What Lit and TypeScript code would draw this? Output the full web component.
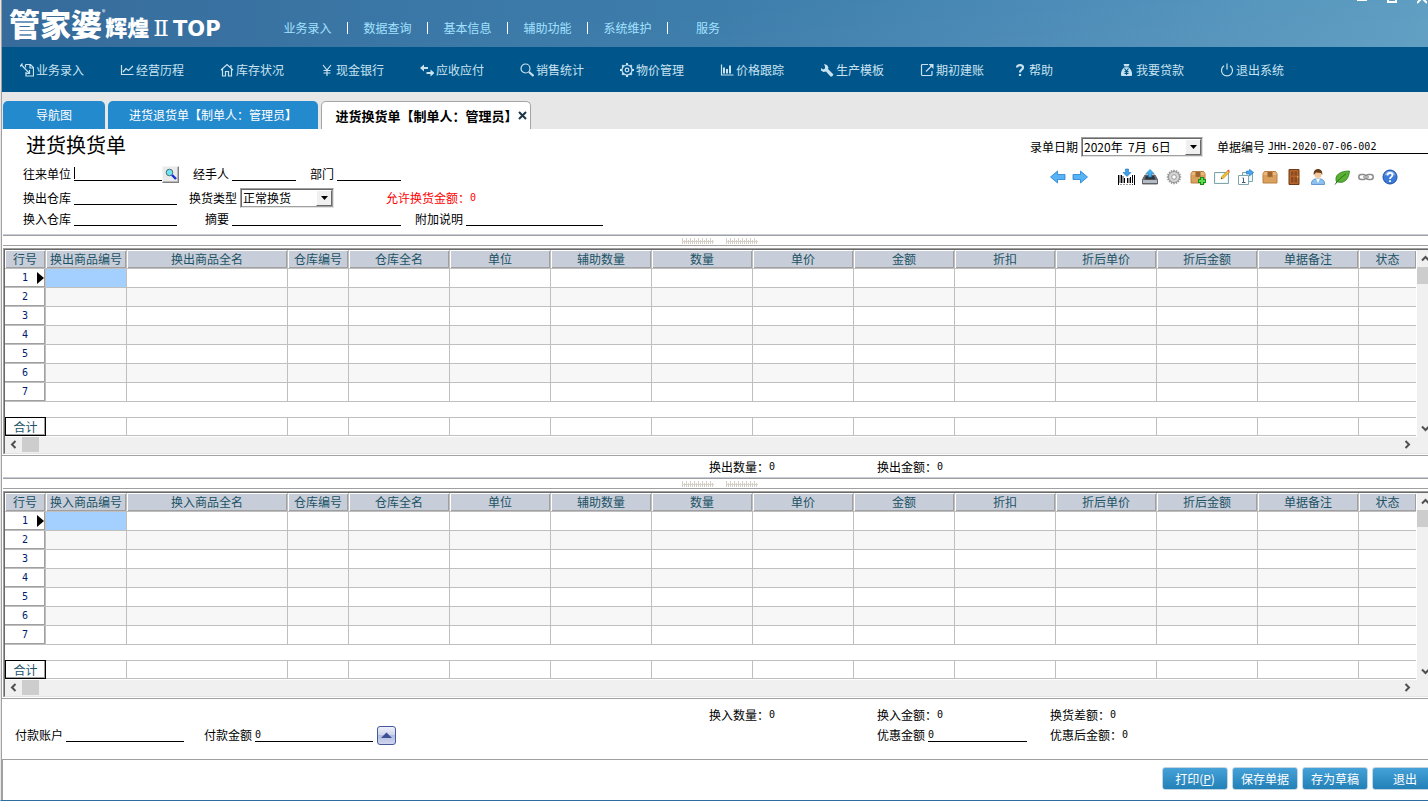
import { LitElement, html, svg, css, nothing } from "lit";
import { customElement, property } from "lit/decorators.js";
import { classMap } from "lit/directives/class-map.js";

const NAV_ICONS: Record<string, unknown> = {
  entry: svg`<path d="M5.500 1.500h5l3 3v8.500h-7.500v-4M10 1.500v3.500h3.500M1 1.500l8.500 9M0 3.500l2.500-3M9.500 7v3.500H6.500M5.500 1.500v3" />`,
  chart: svg`<path d="M1.500 2v9.500h12M3 9l3-3.500 2.500 2L13 3" />`,
  house: svg`<path d="M1 7l6-5.500L13 7M2.500 6v7h3V8.500h3V13h3V6M11 2v2.500" />`,
  yen: svg`<path d="M3 2l4 5 4-5M7 7v6M3.500 7.500h7M3.500 10h7" />`,
  swap: svg`<path d="M3 5h5M6.500 10h5" stroke-width="2" /><path class="fill" d="M0 5l4-3.500v7zM14.500 10l-4-3.500v7z" />`,
  search: svg`<circle cx="5.500" cy="5.500" r="4.500" /><path d="M9 9l4.500 4" stroke-width="2.200" />`,
  gear: svg`<circle cx="7" cy="7" r="5" /><circle cx="7" cy="7" r="1.800" /><path stroke-width="2" d="M7 0v2M7 12v2M0 7h2M12 7h2M2.200 2.200l1.300 1.300M10.500 10.500l1.300 1.300M2.200 11.800l1.300-1.300M10.500 3.500l1.300-1.300" />`,
  bars: svg`<path d="M1.500 1.500v10.500h12" /><path stroke-width="2" d="M4 4.500v6M7 6v4.500M10 2.500v8" />`,
  wrench: svg`<path class="fill" d="M4 1l3 1 1.500 2.500-.5 1.500 5.500 5.500-1.500 2h-1.500L6 8.500 3.500 9 1 7.500V5l2 1.500L5 5.500V3.500z" />`,
  open: svg`<path d="M8 1.500H2.500a1 1 0 0 0-1 1v9a1 1 0 0 0 1 1h8.500a1 1 0 0 0 1-1V8M6 8.500L11.500 3" /><path class="fill" d="M8.500 1h5v5z" />`,
  help: svg`<path stroke-width="2.200" d="M4 4.500c0-3.300 6-3.300 6 0C10 7 7 6.500 7 9.500M7 11v2" />`,
  bag: svg`<path class="fill" d="M3.500 1h6l-1 2.500h-4zM4.500 4.300h4C11 6 12.500 9 12 12.500c0 .3-.4.500-1 .5H2c-.6 0-1-.2-1-.5C.5 9 2 6 4.500 4.300z" /><path class="dark" d="M4.500 5.500l2 2.500 2-2.500M6.500 8v4M4.500 8.500h4M4.500 10.300h4" />`,
  power: svg`<path d="M4 2.800a5.500 5.500 0 1 0 6 0M7 0.500v6" />`,
};

const NAV: [string, string][] = [
  ["entry", "业务录入"], ["chart", "经营历程"], ["house", "库存状况"], ["yen", "现金银行"],
  ["swap", "应收应付"], ["search", "销售统计"], ["gear", "物价管理"], ["bars", "价格跟踪"],
  ["wrench", "生产模板"], ["open", "期初建账"], ["help", "帮助"], ["bag", "我要贷款"], ["power", "退出系统"],
];

const box = svg`<path fill="#d9a15c" stroke="#b98045" d="M1 4.500L2.500 2.500h11L15 4.500v9.500H1z" /><path fill="#e9b97c" d="M1.500 4.700L2.800 3h10.400l1.300 1.700v1.300h-13z" /><path fill="#9b6431" d="M5.500 3h5v5.500l-1.200-1-1.300 1-1.300-1-1.200 1z" />`;

const TOOL_ICONS: [string, unknown][] = [
  ["条码录入", svg`<path stroke="#000" d="M.5 6v10M3.500 6v8M6.500 9v5M9.500 9v5M12.500 8v6M14.500 6v8M16.500 6v10" /><path stroke="#000" stroke-width=".8" d="M2 6v8M5 7v7M11 9v5M2.500 15.500h1M5.500 15.500h1M8.500 15.500h1M11.500 15.500h1M14 15.500h1" /><path fill="#3fa0ea" stroke="#1c6fc0" stroke-width=".6" d="M7.500 0h3v3.500H13L9 7.500 5 3.500h2.500z" />`],
  ["导出", svg`<path fill="#6b7078" stroke="#4a4e55" stroke-width=".8" d="M3 6h10l2.500 4.500V15H.5v-4.500z" /><path fill="#b5bac2" d="M1 11h14v3H1z" /><path fill="#31353b" d="M4 7h8l1.500 3.500h-11z" /><path fill="#3fb0f0" stroke="#1b79be" stroke-width=".6" d="M6.500 8V4.500H4L8 .5l4 4H9.500V8z" />`],
  ["设置", svg`<circle cx="8" cy="8" r="5.500" fill="#d5d5d5" stroke="#979797" /><path stroke="#979797" stroke-width="1.600" d="M8 .8v2M8 13.200v2M.8 8h2M13.200 8h2M3 3l1.300 1.300M11.700 11.700L13 13M3 13l1.300-1.300M11.700 4.300L13 3M5.200 1.400l.7 1.700M10.800 1.400l-.7 1.700M5.200 14.600l.7-1.700M10.800 14.600l-.7-1.700M1.400 5.200l1.700.7M1.400 10.800l1.700-.7M14.600 5.200l-1.700.7M14.600 10.800l-1.700-.7" /><circle cx="8" cy="8" r="2.300" fill="#fff" stroke="#999" />`],
  ["新增商品", svg`${box}<path stroke="#1a8a1a" stroke-width="4" d="M12 8v8M8 12h8" /><path stroke="#5edb4a" stroke-width="2" d="M12 9v6M9 12h6" />`],
  ["编辑", svg`<path fill="#eef7f7" stroke="#7fa5ad" d="M.5 3.500h14v11H.5z" /><path fill="#fff" d="M2 5h11v8H2z" /><path fill="#f5c431" stroke="#a77912" stroke-width=".6" d="M7 10l.8-2.500 6-6 1.700 1.500-6 6.200z" /><path fill="#e0604f" d="M13.200 1.500l1-1L16 2l-1 1z" /><path fill="#333" d="M7 10l.4-1.200.8.700z" />`],
  ["转换", svg`<path fill="#eef7f7" stroke="#7fa5ad" d="M4.500 3.500h10v9h-10z" /><path fill="#fff" stroke="#7fa5ad" d="M.5 6.500h10v9H.5z" /><path stroke="#3f5f7a" d="M4.500 9h1v4.500M4 13.500h3.500" /><path fill="#4aa6ef" stroke="#1d75c4" stroke-width=".6" d="M8.500 2h3V.3L15.700 3.500 11.500 7V5h-3z" />`],
  ["商品", box],
  ["退出单据", svg`<path fill="#b3652d" stroke="#6f3a15" d="M3 .5h10v15H3z" /><path fill="#8d4a1d" d="M5 2.500h2.500v4H5zM8.500 2.500H11v4H8.500zM5 8h2.500v5.500H5zM8.500 8H11v5.500H8.500z" /><circle cx="11.700" cy="8" r=".8" fill="#f2c458" />`],
  ["职员", svg`<path fill="#8dc0ef" stroke="#4c86c2" stroke-width=".8" d="M1.500 15.500C1 11 4 10 8 9.500c4 .5 7 1.500 6.500 6z" /><path fill="#fff" d="M6 9.500h4L8 14z" /><circle cx="8" cy="5.500" r="3.500" fill="#f2c79c" /><path fill="#6a3e1d" d="M3.800 6C3 1.500 6 0 8 0s5 1.500 4.200 6L11 4 6 3.500z" />`],
  ["叶子", svg`<path fill="#58b035" stroke="#2f7d1b" stroke-width=".8" d="M2.500 13C0 6 6 2 15.500 2 15 9 11 15 4 13z" /><path stroke="#2b701a" d="M1 15.500C4 11 8 7.500 12 5" />`],
  ["关联", svg`<rect x=".8" y="5.500" width="7" height="5" rx="2.500" stroke="#8b8b8b" stroke-width="1.500" /><rect x="8.200" y="5.500" width="7" height="5" rx="2.500" stroke="#8b8b8b" stroke-width="1.500" /><path stroke="#b5b5b5" stroke-width="2" d="M5 8h6" />`],
  ["帮助", svg`<circle cx="8" cy="8" r="7" fill="#3b7bd9" stroke="#1e4fa5" /><path fill="#7dabe9" d="M2.500 6.500a5.600 5.600 0 0 1 11 0c-3-1.500-8-1.500-11 0z" /><path stroke="#fff" stroke-width="1.800" d="M5.500 6.500C5.500 3 10.500 3 10.500 6 10.500 8 8 7.800 8 10M8 11.300v1.700" />`],
];

const leftArrow = svg`<path fill="#57b3f5" stroke="#2580d0" stroke-width=".8" d="M.5 8l7-6v3.500h7.500v5H7.500V14z" />`;
const rightArrow = svg`<path fill="#57b3f5" stroke="#2580d0" stroke-width=".8" d="M15.500 8l-7-6v3.500H1v5h7.500V14z" />`;

const chevron = (d: string) => html`<svg class="chev" viewBox="0 0 9 9" width="9" height="9" aria-hidden="true"><path d=${d} /></svg>`;

const shared = css`
  * { box-sizing: border-box; }
  button { font: inherit; color: inherit; border: 0; padding: 0; margin: 0; background: none; cursor: default; }
  svg { display: block; flex: none; fill: none; }
`;

@customElement("goods-grid")
export class GoodsGrid extends LitElement {
  @property() kind = "换出";

  static styles = [shared, css`
    :host { display: block; margin: 2px 0 1px 1px; border-top: 1px solid #a0a0a0; border-left: 1px solid #a0a0a0; }
    .frame {
      display: grid; grid-template-columns: minmax(0, 1fr) 12px;
      border-top: 1px solid #696969; border-left: 1px solid #696969; border-bottom: 1px solid #e3e3e3;
    }
    table { width: 100%; table-layout: fixed; border-collapse: separate; border-spacing: 0; margin-bottom: 1px; }
    .w-no { width: 41px; } .w-code { width: 81px; } .w-name { width: 161px; } .w-short { width: 61px; } .w-std { width: 101px; }
    th, td { height: 19px; padding: 0; font-weight: 400; line-height: 16px; text-align: center; white-space: nowrap; overflow: hidden; border-right: 1px solid #bfbfbf; border-bottom: 1px solid #bfbfbf; }
    td:last-child, thead th:last-child { border-right: 0; }
    thead th { background: #c8ced9; color: #1b5266; box-shadow: inset 1px 1px #fff, inset -1px -1px #a0a0a0; }
    tbody th { position: relative; color: #001a70; font-size: 10px; font-family: "DejaVu Sans Mono", monospace; background: #fff; box-shadow: inset -1px -1px #a0a0a0; }
    tbody tr:nth-child(even) td { background: #f7f7f7; }
    tbody .current { background: #a3d0ff; }
    tbody tr.blank:last-child td { height: 15px; border-right: 0; border-bottom: 0; background: #fff; }
    tfoot td { border-top: 1px solid #bfbfbf; }
    tfoot th { border: 1px solid #000; color: #1b5266; box-shadow: inset -1px -1px #a0a0a0; }
    .pointer { position: absolute; right: 1px; top: 3px; }
    .vbar { display: flex; flex-direction: column; background: #f0f0f0; border-left: 1px solid #fff; overflow: hidden; }
    .hbar { display: flex; height: 16px; background: #f0f0f0; }
    .corner { background: #f0f0f0; }
    .arrow { width: 17px; height: 17px; display: grid; place-items: center; flex: none; }
    .hbar .arrow { height: 15px; }
    .thumb { width: 17px; height: 17px; background: #cdcdcd; }
    .hbar .thumb { height: 15px; }
    .hbar .arrow:last-child { margin-left: auto; }
    .vbar .arrow:last-child { margin-top: auto; }
    .chev { stroke: #505050; stroke-width: 2; }
  `];

  render() {
    const heads = ["行号", `${this.kind}商品编号`, `${this.kind}商品全名`, "仓库编号", "仓库全名", "单位", "辅助数量", "数量", "单价", "金额", "折扣", "折后单价", "折后金额", "单据备注", "状态"];
    const cells = heads.slice(1);
    return html`
      <div class="frame">
        <table>
          <colgroup>
            <col class="w-no" /><col class="w-code" /><col class="w-name" /><col class="w-short" />
            ${heads.slice(4, 14).map(() => html`<col class="w-std" />`)}<col />
          </colgroup>
          <thead><tr>${heads.map((h) => html`<th scope="col">${h}</th>`)}</tr></thead>
          <tbody>
            ${[1, 2, 3, 4, 5, 6, 7].map((n) => html`<tr>
              <th scope="row">${n}${n === 1 ? html`<svg class="pointer" width="7" height="12" viewBox="0 0 7 12"><path fill="#000" d="M0 0l7 6-7 6z" /></svg>` : nothing}</th>
              ${cells.map((_, i) => html`<td class=${classMap({ current: n === 1 && i === 0 })}></td>`)}
            </tr>`)}
            <tr class="blank"><td colspan="15"></td></tr>
          </tbody>
          <tfoot><tr><th scope="row">合计</th>${cells.map(() => html`<td></td>`)}</tr></tfoot>
        </table>
        <div class="vbar">
          <button class="arrow" aria-label="向上">${chevron("M1 6.500L4.500 3 8 6.500")}</button>
          <div class="thumb"></div>
          <button class="arrow" aria-label="向下">${chevron("M1 2.500L4.500 6 8 2.500")}</button>
        </div>
        <div class="hbar">
          <button class="arrow" aria-label="向左">${chevron("M6.500 1L3 4.500 6.500 8")}</button>
          <div class="thumb"></div>
          <button class="arrow" aria-label="向右">${chevron("M2.500 1L6 4.500 2.500 8")}</button>
        </div>
        <div class="corner"></div>
      </div>`;
  }
}

@customElement("app-root")
export class AppRoot extends LitElement {
  static styles = [shared, css`
    :host {
      display: flex; flex-direction: column; min-height: 100vh; box-sizing: border-box; overflow: hidden;
      font: 12px/16px "Noto Sans CJK SC", "Liberation Sans", sans-serif; color: #000; background: #fff;
      border-left: 1px solid #e8e8e8; border-bottom: 1px solid #2c6f9f;
    }
    .window { flex: 1; display: flex; flex-direction: column; border-left: 1px solid #a0a0a0; }

    .banner { display: flex; height: 47px; color: #fff; background: linear-gradient(175deg, #ffffff00 40%, #ffffff0a), linear-gradient(90deg, #366b9b, #3b78a7 30%, #3d7dab 50%, #4a8ab6 72%, #5c9cc1); }
    .logo { display: flex; align-items: baseline; width: 266px; padding-left: 7px; white-space: nowrap; line-height: 46px; font-weight: 900; }
    .logo-main { font-size: 31px; }
    .reg { font-size: 7px; font-weight: 400; align-self: flex-start; line-height: 24px; }
    .logo-sub { font-size: 22px; }
    .logo-num { font: 400 23px/46px "DejaVu Serif", serif; margin-left: 4px; }
    .logo-top { font: 700 21px/46px "DejaVu Sans", sans-serif; margin-left: 4px; }
    .menu { display: flex; align-items: center; padding-top: 8px; }
    .menu a { width: 80px; text-align: center; color: #a3e2ff; text-decoration: none; line-height: 12px; border-right: 1px solid #fff; }
    .menu a:last-child { border-right: 0; }
    .win-buttons { display: flex; gap: 20px; margin: -7px 1px 0 auto; height: 12px; }
    .win-buttons svg { stroke: #fff; stroke-width: 2; }

    .nav { display: flex; height: 45px; background: #00568b; }
    .nav a { flex: none; width: 100px; display: flex; align-items: center; justify-content: center; gap: 2px; color: #c9e2f0; text-decoration: none; }
    .nav .short { padding-right: 38px; }
    .nav svg { stroke: #c9e2f0; stroke-width: 1.200; }
    .nav .fill { fill: #c9e2f0; stroke: none; }
    .nav .dark { stroke: #00568b; }

    .tabs { display: flex; gap: 3px; align-items: flex-end; height: 37px; padding-left: 1px; background: #e7e7e7; }
    .tab { height: 28px; border-radius: 5px 5px 0 0; background: #248ace; color: #fff; width: 210px; display: flex; align-items: center; justify-content: center; white-space: nowrap; }
    .tab.home { width: 102px; }
    .tab.active { background: #fff; color: #000; font-weight: 700; font-size: 13px; border: 1px solid #a5a5a5; border-bottom: 0; padding-left: 10px; }
    .tab svg { stroke: #1b3648; stroke-width: 2; }

    .form { display: flex; justify-content: space-between; padding-bottom: 5px; }
    .left { padding-left: 21px; }
    h1 { margin: 0; padding-left: 3px; font-size: 20px; font-weight: 400; line-height: 32px; }
    .row { display: flex; align-items: center; white-space: nowrap; }
    .r1 { height: 26px; } .r2 { height: 22px; } .r3 { height: 20px; }
    .field { display: flex; align-items: center; gap: 3px; }
    label { flex: none; }
    input { font: 12px/12px "Liberation Sans", "Noto Sans CJK SC", sans-serif; height: 14px; border: 0; border-bottom: 1px solid #000; border-radius: 0; padding: 0; background: transparent; outline: 0; min-width: 0; color: #000; }
    .w64 { width: 64px; } .w88 { width: 88px; } .w103 { width: 103px; } .w99 { width: 99px; } .w118 { width: 118px; } .w137 { width: 137px; } .w169 { width: 169px; }
    .caret { background: linear-gradient(#000, #000) 0 0 / 1px 12px no-repeat; }
    .mono { font-family: "DejaVu Sans Mono", monospace; font-size: 10px; }
    .gap12 { margin-left: 12px; } .gap14 { margin-left: 14px; } .gap20 { margin-left: 20px; } .gap28 { margin-left: 28px; } .gap52 { margin-left: 52px; }
    .lookup { width: 17px; height: 17px; display: grid; place-items: center; background: #eaeaea; border: 1px solid; border-color: #f4f4f4 #808080 #808080 #f4f4f4; box-shadow: inset -1px -1px #b8b8b8; }
    .allow { color: #f00; }
    .pick { display: grid; grid-template-columns: minmax(0, 1fr) auto; align-items: center; }
    .pick select { grid-area: 1 / 1 / 2 / 3; appearance: none; font: inherit; line-height: 14px; color: #000; height: 20px; padding: 0 18px 0 2px; margin: 0; border-radius: 0; background: #fff; border: 1px solid; border-color: #a0a0a0 #e3e3e3 #e3e3e3 #a0a0a0; box-shadow: inset 1px 1px #696969, inset -1px -1px #a0a0a0; outline: 0; white-space: pre; }
    .pick span { grid-area: 1 / 2; width: 16px; height: 16px; margin-right: 2px; display: grid; place-items: center; pointer-events: none; background: #f0f0f0; border: 1px solid; border-color: #fff #696969 #696969 #fff; }
    .type select { width: 94px; }
    .date select { width: 122px; }
    .right { width: 398px; }
    .r0 { height: 36px; }
    .code { flex: 1; }
    .code input { flex: 1; }
    .tools { display: flex; align-items: center; gap: 8px; height: 24px; padding-left: 20px; }
    .tools .next { margin: 0 22px 0 -2px; }
    .tools svg { overflow: visible; }

    .split { height: 12px; border-top: 1px solid #c8ced9; border-bottom: 1px solid #a0a0a0; box-shadow: inset 0 1px #a0a0a0; margin-left: 1px; display: flex; justify-content: center; align-items: center; gap: 11px; padding: 1px 0 0 7px; }
    .sums { display: grid; grid-template-columns: 707px 168px 173px minmax(0, 1fr); align-items: center; border-top: 1px solid #a0a0a0; height: 22px; white-space: nowrap; }
    .sum { display: flex; align-items: center; }
    .pay { flex: 1; height: auto; min-height: 61px; grid-template-rows: 20px 20px; padding-top: 6px; align-content: start; }
    .pay .row { padding-left: 13px; }
    .up { width: 19px; height: 19px; display: grid; place-items: center; margin-left: 4px; border: 1px solid #46599b; border-radius: 3px; background: linear-gradient(#eef0fa, #ccd2ea 50%, #b4bddf 50%, #d0d6ee); }
    .actions { display: flex; justify-content: flex-end; gap: 4px; height: 41px; padding: 7px 0 0; margin-right: -10px; border-top: 1px solid #a0a0a0; border-left: 1px solid #a0a0a0; }
    .actions button { width: 66px; height: 23px; border: 1px solid #c3d5e0; border-radius: 3px; color: #fff; background: linear-gradient(#45a1d7, #2381b7); }
  `];

  private pick(id: string, cls: string, value: string) {
    return html`<div class="pick ${cls}">
      <select id=${id}><option>${value}</option></select>
      <span><svg width="7" height="4" viewBox="0 0 7 4"><path fill="#000" d="M0 0h7L3.500 4z" /></svg></span>
    </div>`;
  }

  private field(id: string, label: string, width: string, gap = "", value = "") {
    return html`<div class="field ${gap}"><label for=${id}>${label}</label><input id=${id} class=${width} .value=${value} /></div>`;
  }

  private sum(label: string) {
    return html`<div class="sum">${label}：<output class="mono">0</output></div>`;
  }

  private tool(name: string, icon: unknown, cls = "") {
    return html`<button class=${cls} aria-label=${name}><svg width="16" height="16" viewBox="0 0 16 16">${icon}</svg></button>`;
  }

  private splitter() {
    const d = Array.from({ length: 8 }, (_, i) => `M${i * 4 + 1.5} 0v6M${i * 4 + 3.5} 2v4M${i * 4 + 1} 3.500h4`).join("");
    const grip = () => html`<svg width="33" height="6" viewBox="0 0 33 6"><path stroke="#d4d0c8" d=${d} /></svg>`;
    return html`<div class="split">${grip()}${grip()}</div>`;
  }

  render() {
    return html`
      <div class="window">
        <header class="banner">
          <div class="logo">
            <span class="logo-main">管家婆</span><span class="reg">®</span><span class="logo-sub">辉煌</span><span class="logo-num">Ⅱ</span><span class="logo-top">TOP</span>
          </div>
          <nav class="menu">${["业务录入", "数据查询", "基本信息", "辅助功能", "系统维护", "服务"].map((m) => html`<a href="#">${m}</a>`)}</nav>
          <div class="win-buttons">
            <button aria-label="最小化"><svg width="10" height="12"><path d="M0 7h10" /></svg></button>
            <button aria-label="最大化"><svg width="10" height="12"><path d="M1 1h8v8H1z" /></svg></button>
            <button aria-label="关闭"><svg width="10" height="12"><path d="M0 0l10 10M10 0L0 10" /></svg></button>
          </div>
        </header>
        <nav class="nav">
          ${NAV.map(([icon, text]) => html`<a href="#" class=${classMap({ short: text.length < 3 })}><svg width="14" height="14" viewBox="0 0 14 14">${NAV_ICONS[icon]}</svg>${text}</a>`)}
        </nav>
        <div class="tabs">
          <button class="tab home">导航图</button>
          <button class="tab">进货退货单【制单人：管理员】</button>
          <button class="tab active">进货换货单【制单人：管理员】<svg width="9" height="9" viewBox="0 0 9 9"><path d="M1 1l7 7M8 1L1 8" /></svg></button>
        </div>

        <section class="form">
          <div class="left">
            <h1>进货换货单</h1>
            <div class="row r1">
              ${this.field("partner", "往来单位", "w88 caret")}
              <button class="lookup" aria-label="查找往来单位"><svg width="12" height="12" viewBox="0 0 12 12"><circle cx="4.500" cy="4.500" r="3.300" fill="#6fe3ee" stroke="#4c6f80" /><path stroke="#1030d8" stroke-width="2.400" d="M7 7l4 4" /></svg></button>
              ${this.field("handler", "经手人", "w64", "gap14")}
              ${this.field("dept", "部门", "w64", "gap14")}
            </div>
            <div class="row r2">
              ${this.field("outstore", "换出仓库", "w103")}
              <div class="field gap12"><label for="type">换货类型</label>${this.pick("type", "type", "正常换货")}</div>
              <div class="allow sum gap52">允许换货金额：<output class="mono">0</output></div>
            </div>
            <div class="row r3">
              ${this.field("instore", "换入仓库", "w103")}
              ${this.field("summary", "摘要", "w169", "gap28")}
              ${this.field("note", "附加说明", "w137", "gap14")}
            </div>
          </div>
          <div class="right">
            <div class="row r0">
              <div class="field"><label for="date">录单日期</label>${this.pick("date", "date", "2020年\u00a0 7月\u00a0 6日")}</div>
              <div class="field code gap14"><label for="code">单据编号</label><input id="code" class="mono" value="JHH-2020-07-06-002" /></div>
            </div>
            <div class="tools">
              ${this.tool("上一张", leftArrow)}${this.tool("下一张", rightArrow, "next")}
              ${TOOL_ICONS.map(([name, icon]) => this.tool(name, icon))}
            </div>
          </div>
        </section>

        ${this.splitter()}
        <goods-grid kind="换出"></goods-grid>
        <div class="sums"><span></span>${this.sum("换出数量")}${this.sum("换出金额")}</div>
        ${this.splitter()}
        <goods-grid kind="换入"></goods-grid>
        <div class="sums pay">
          <span></span>${this.sum("换入数量")}${this.sum("换入金额")}${this.sum("换货差额")}
          <div class="row">
            ${this.field("account", "付款账户", "w118")}
            ${this.field("paid", "付款金额", "w118 mono", "gap20", "0")}
            <button class="up" aria-label="展开"><svg width="11" height="6" viewBox="0 0 11 6"><path fill="#3b4f96" d="M0 6l5.500-5.500L11 6z" /></svg></button>
          </div>
          <span></span>
          ${this.field("discount", "优惠金额", "w99 mono", "", "0")}
          ${this.sum("优惠后金额")}
        </div>
        <footer class="actions">
          <button>打印(<u>P</u>)</button><button>保存单据</button><button>存为草稿</button><button>退出</button>
        </footer>
      </div>`;
  }
}
